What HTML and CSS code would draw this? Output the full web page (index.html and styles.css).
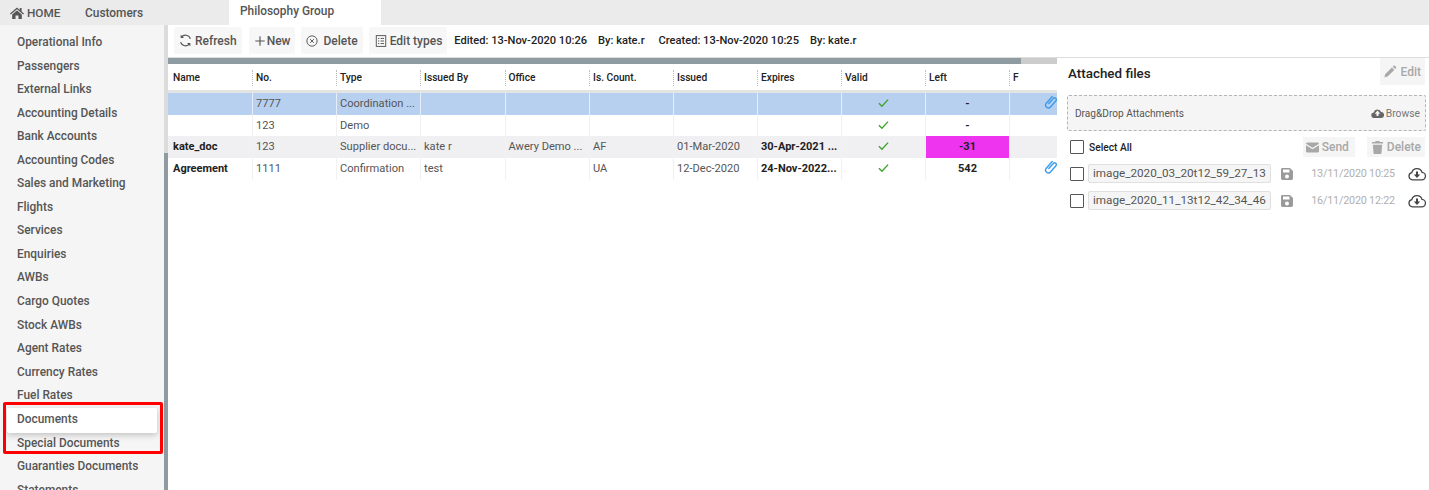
FILE: index.html
```html
<!DOCTYPE html>
<html lang="en">
<head>
<meta charset="utf-8">
<title>Philosophy Group</title>
<link rel="stylesheet" href="styles.css">
</head>
<body>
<svg class="defs" width="0" height="0">
  <symbol id="clip" viewBox="0 0 14 15"><path d="M4.200 8.600L9 3.200a1.800 1.800 0 0 1 2.800 2.300L6 12.200a3 3 0 0 1-4.500-4L7.800 1" transform="translate(1 0.600)" fill="none" stroke="currentColor" stroke-width="1.500" stroke-linecap="round"/></symbol>
  <symbol id="check" viewBox="0 0 12 10"><path d="M1 5.200L4.300 8.500L11 1.300" fill="none" stroke="currentColor" stroke-width="1.500"/></symbol>
  <symbol id="save" viewBox="0 0 12 12"><path d="M1.500 0h7.500L12 3v7.500A1.500 1.500 0 0 1 10.500 12h-9A1.500 1.500 0 0 1 0 10.500v-9A1.500 1.500 0 0 1 1.500 0zM2 1.500v3h6.500v-3zM6 6.500a2 2 0 1 0 0 4 2 2 0 0 0 0-4z" fill="currentColor" fill-rule="evenodd"/></symbol>
  <symbol id="cloud" viewBox="0 0 18 14"><path d="M4.500 12.800A3.600 3.600 0 0 1 3.800 5.700 5.300 5.300 0 0 1 14 5.400a3.700 3.700 0 0 1-.5 7.400z" fill="none" stroke="currentColor" stroke-width="1.300"/><path d="M8 4.500h2V7.500h2.200L9 11 5.800 7.500H8z" fill="currentColor"/></symbol>
</svg>

<header class="topbar">
  <a class="nav-link home">
    <svg class="home-icon" viewBox="0 0 14 12"><path d="M7 0.500L0 6.500l.8.900L7 2.200l6.200 5.200.8-.9-2.400-2V1h-1.800v2zM2.200 7.600V12h3.300V8.500h3V12h3.300V7.600L7 3.600z" fill="currentColor"/></svg>
    HOME
  </a>
  <a class="nav-link customers">Customers</a>
  <a class="tab-active">Philosophy Group</a>
</header>

<div class="shell">
  <nav class="sidebar">
    <a class="side-item">Operational Info</a>
    <a class="side-item">Passengers</a>
    <a class="side-item">External Links</a>
    <a class="side-item">Accounting Details</a>
    <a class="side-item">Bank Accounts</a>
    <a class="side-item">Accounting Codes</a>
    <a class="side-item">Sales and Marketing</a>
    <a class="side-item">Flights</a>
    <a class="side-item">Services</a>
    <a class="side-item">Enquiries</a>
    <a class="side-item">AWBs</a>
    <a class="side-item">Cargo Quotes</a>
    <a class="side-item">Stock AWBs</a>
    <a class="side-item">Agent Rates</a>
    <a class="side-item">Currency Rates</a>
    <a class="side-item">Fuel Rates</a>
    <a class="side-item active">Documents</a>
    <a class="side-item">Special Documents</a>
    <a class="side-item">Guaranties Documents</a>
    <a class="side-item">Statements</a>
  </nav>
  <div class="side-scroll"><div class="side-thumb"></div></div>

  <main class="content">
    <div class="toolbar">
      <button class="tool-btn refresh">
        <svg class="tool-icon" viewBox="0 0 14 14"><path d="M12.300 5.200A5.600 5.600 0 0 0 2.400 3.600M1.700 8.800a5.600 5.600 0 0 0 9.900 1.600" fill="none" stroke="currentColor" stroke-width="1.200"/><path d="M1.800 0.800v3.600h3.600zM12.200 13.200V9.600H8.600z" fill="currentColor"/></svg>
        Refresh
      </button>
      <button class="tool-btn new">
        <svg class="tool-icon" viewBox="0 0 14 14"><path d="M7 1.500v11M1.500 7h11" fill="none" stroke="currentColor" stroke-width="1.300"/></svg>
        New
      </button>
      <button class="tool-btn del">
        <svg class="tool-icon" viewBox="0 0 14 14"><circle cx="7" cy="7" r="6" fill="none" stroke="currentColor" stroke-width="1.100"/><path d="M4.800 4.800l4.400 4.400M9.200 4.800l-4.400 4.400" fill="none" stroke="currentColor" stroke-width="1.100"/></svg>
        Delete
      </button>
      <button class="tool-btn types">
        <svg class="tool-icon" viewBox="0 0 14 14"><rect x="1.500" y="0.700" width="11" height="12.600" fill="none" stroke="currentColor" stroke-width="1.100"/><path d="M3.500 4h1.500M6.500 4h4M3.500 7h1.500M6.500 7h4M3.500 10h1.500M6.500 10h4" fill="none" stroke="currentColor" stroke-width="1.100"/></svg>
        Edit types
      </button>
      <div class="meta">
        <span>Edited: 13-Nov-2020 10:26</span>
        <span>By: kate.r</span>
        <span>Created: 13-Nov-2020 10:25</span>
        <span>By: kate.r</span>
      </div>
    </div>

    <div class="work">
      <section class="grid-area">
        <div class="h-scroll"><div class="h-thumb"></div></div>
        <div class="grid-row head">
          <div class="cell">Name</div><div class="cell">No.</div><div class="cell">Type</div><div class="cell">Issued By</div><div class="cell">Office</div><div class="cell">Is. Count.</div><div class="cell">Issued</div><div class="cell">Expires</div><div class="cell">Valid</div><div class="cell">Left</div><div class="cell">F</div>
        </div>
        <div class="grid-row data selected">
          <div class="cell"></div><div class="cell">7777</div><div class="cell">Coordination ...</div><div class="cell"></div><div class="cell"></div><div class="cell"></div><div class="cell"></div><div class="cell"></div>
          <div class="cell center ok"><svg class="check"><use href="#check"/></svg></div><div class="cell center strong">-</div><div class="cell clipcell"><svg class="clip"><use href="#clip"/></svg></div>
        </div>
        <div class="grid-row data">
          <div class="cell"></div><div class="cell">123</div><div class="cell">Demo</div><div class="cell"></div><div class="cell"></div><div class="cell"></div><div class="cell"></div><div class="cell"></div>
          <div class="cell center ok"><svg class="check"><use href="#check"/></svg></div><div class="cell center strong">-</div><div class="cell"></div>
        </div>
        <div class="grid-row data alt">
          <div class="cell strong">kate_doc</div><div class="cell">123</div><div class="cell">Supplier docu...</div><div class="cell">kate r</div><div class="cell">Awery Demo ...</div><div class="cell">AF</div><div class="cell">01-Mar-2020</div><div class="cell strong">30-Apr-2021 ...</div>
          <div class="cell center ok"><svg class="check"><use href="#check"/></svg></div><div class="cell center strong overdue">-31</div><div class="cell"></div>
        </div>
        <div class="grid-row data">
          <div class="cell strong">Agreement</div><div class="cell">1111</div><div class="cell">Confirmation</div><div class="cell">test</div><div class="cell"></div><div class="cell">UA</div><div class="cell">12-Dec-2020</div><div class="cell strong">24-Nov-2022...</div>
          <div class="cell center ok"><svg class="check"><use href="#check"/></svg></div><div class="cell center strong">542</div><div class="cell clipcell"><svg class="clip"><use href="#clip"/></svg></div>
        </div>
      </section>

      <aside class="files">
        <div class="files-head">
          <h2>Attached files</h2>
          <button class="file-btn edit">
            <svg class="btn-icon" viewBox="0 0 14 14"><path d="M0.500 13.500l.8-3.500 7.500-7.500 2.700 2.700-7.500 7.500zM9.700 1.600l1-1a1 1 0 0 1 1.400 0l1.300 1.300a1 1 0 0 1 0 1.400l-1 1z" fill="currentColor"/></svg>
            Edit
          </button>
        </div>
        <div class="dropzone">
          <span>Drag&amp;Drop Attachments</span>
          <span class="browse">
            <svg class="browse-icon" viewBox="0 0 14 11"><path d="M3.500 11A3 3 0 0 1 2.800 5 4.300 4.300 0 0 1 11 4.400 3.300 3.300 0 0 1 10.800 11zM7 2.800L3.900 6.200h2v2.600h2.200V6.200h2z" fill="currentColor" fill-rule="evenodd"/></svg>
            Browse
          </span>
        </div>
        <div class="select-row">
          <label class="select-all"><span class="box"></span>Select All</label>
          <button class="file-btn">
            <svg class="btn-icon" viewBox="0 0 14 11"><path d="M0 1.500A1.500 1.500 0 0 1 1.500 0h11A1.500 1.500 0 0 1 14 1.500L7 5.800zM0 3.200l7 4.200 7-4.200v6.300a1.500 1.500 0 0 1-1.500 1.500h-11A1.500 1.500 0 0 1 0 9.500z" fill="currentColor"/></svg>
            Send
          </button>
          <button class="file-btn">
            <svg class="btn-icon" viewBox="0 0 12 14"><path d="M4 0h4l.6 1.200H12v1.600H0V1.200h3.400zM1 4h10l-.7 9a1 1 0 0 1-1 1H2.700a1 1 0 0 1-1-1z" fill="currentColor"/></svg>
            Delete
          </button>
        </div>
        <div class="file-row">
          <span class="box"></span>
          <span class="file-name">image_2020_03_20t12_59_27_13</span>
          <svg class="save"><use href="#save"/></svg>
          <span class="file-date">13/11/2020 10:25</span>
          <svg class="cloud"><use href="#cloud"/></svg>
        </div>
        <div class="file-row">
          <span class="box"></span>
          <span class="file-name">image_2020_11_13t12_42_34_46</span>
          <svg class="save"><use href="#save"/></svg>
          <span class="file-date">16/11/2020 12:22</span>
          <svg class="cloud"><use href="#cloud"/></svg>
        </div>
      </aside>
    </div>
  </main>
</div>
<div class="callout"></div>
</body>
</html>
```
FILE: styles.css
```css
* { box-sizing: border-box; }
html, body { margin: 0; height: 100%; overflow: hidden; }
body { font-family: Roboto, "Liberation Sans", sans-serif; font-size: 12px; font-weight: 500; color: #4b4b4b; background: #fff; position: relative; }
.defs { position: absolute; }

.topbar { height: 25px; background: #ebebeb; display: flex; align-items: center; }
.nav-link { color: #555; }
.home { margin-left: 10px; width: 75px; display: flex; align-items: center; gap: 3px; font-size: 11.800px; }
.home-icon { width: 14px; height: 12px; }
.customers { width: 144px; font-size: 11.900px; }
.tab-active { width: 152px; height: 25px; background: #fff; padding-left: 11px; line-height: 23px; color: #555; font-size: 11.900px; }

.shell { display: flex; height: 465px; }
.sidebar { width: 164px; background: #f5f5f5; padding: 6px 4px 0 5px; overflow: hidden; flex: none; font-size: 11.900px; }
.side-item { display: block; height: 23.550px; line-height: 23.550px; padding-left: 12px; color: #565656; white-space: nowrap; border-radius: 2px; }
.side-item.active { background: #fff; box-shadow: 0 2px 6px rgba(0,0,0,.22); margin: 0 3px 0 2px; padding-left: 10px; height: 25px; margin-bottom: -1px; position: relative; z-index: 0; }
.side-scroll { width: 4px; background: #dcdcdc; flex: none; }
.side-thumb { margin-top: 128px; height: 337px; background: #8e9ba1; }

.content { flex: 1; min-width: 0; display: flex; flex-direction: column; }
.toolbar { height: 33px; display: flex; align-items: center; padding-left: 6px; gap: 7px; border-bottom: 1px solid #ddd; flex: none; }
.tool-btn { height: 27px; padding: 0 5px; border: 0; border-radius: 2px; background: #f7f7f7; font: inherit; color: #555; display: flex; align-items: center; gap: 3px; white-space: nowrap; margin-top: -1px; }
.tool-icon { width: 12px; height: 12px; }
.tool-btn.refresh { gap: 3px; }
.tool-btn.refresh .tool-icon { width: 13px; height: 13px; }
.tool-btn.new { gap: 1px; margin-right: -1px; }
.tool-btn.del { gap: 5px; margin-right: -1px; }
.tool-btn.types { padding-left: 6px; }
.meta { display: flex; gap: 11px; font-size: 11.100px; color: #222; white-space: nowrap; margin-top: -1px; }
.meta span:nth-child(2) { margin-right: 3px; }

.work { flex: 1; display: flex; }
.grid-area { width: 889px; flex: none; }
.h-scroll { height: 6px; background: #ccc; }
.h-thumb { width: 853px; height: 6px; background: #8e9ba1; }
.grid-row { display: grid; grid-template-columns: 84px 84px 84px 84.500px 84.500px 84px 84px 84px 84px 84px 1fr; }
.head { height: 29px; align-items: center; font-size: 10.200px; color: #222; border-bottom: 3px solid #e4e4e4; padding-top: 1px; }
.head .cell { height: 16px; line-height: 16px; padding-left: 3px; border-left: 1px dotted #bbb; }
.head .cell:first-child { border-left: 0; padding-left: 5px; }
.data { height: 21.700px; line-height: 21px; font-weight: 400; font-size: 11.100px; color: #555; }
.data .cell { padding-left: 3px; border-left: 1px solid #f1f1f3; white-space: nowrap; overflow: hidden; }
.data .cell:first-child { border-left: 0; padding-left: 5px; }
.selected { background: #b8d0f0; }
.selected .cell { border-left-color: #e6eefa; }
.alt { background: #f0f0f2; }
.data .strong { font-weight: 700; color: #222; font-size: 11px; }
.data .center { text-align: center; padding: 0; }
.ok { color: #3ea32c; }
.check { width: 11px; height: 10px; vertical-align: -1px; }
.data .overdue { background: #ee34ee; }
.clipcell { color: #3d9be9; text-align: right; }
.data .clipcell { padding-right: 0; line-height: 19px; }
.clip { width: 13px; height: 14px; vertical-align: -3px; }

.files { flex: 1; padding: 0 3px 0 10px; min-width: 0; }
.files-head { display: flex; justify-content: space-between; align-items: center; height: 30px; margin-left: 1px; }
h2 { margin: 0; font-size: 13.400px; font-weight: 500; color: #222; }
.file-btn { height: 20px; padding: 0 4px; border: 0; background: #f5f5f5; font: inherit; color: #a8a8a8; display: flex; align-items: center; gap: 3px; }
.file-btn.edit { height: 27px; width: 45px; margin-right: 1px; align-self: flex-start; gap: 4px; }
.btn-icon { width: 13px; height: 13px; }
.dropzone { height: 36px; margin-top: 7px; display: flex; justify-content: space-between; align-items: center; padding: 0 5px 0 7px; background: #f5f5f5; border: 1px dashed #b5b5b5; border-radius: 2px; font-weight: 400; font-size: 10.100px; color: #555; }
.browse { display: flex; align-items: center; gap: 2px; color: #777; font-size: 10.300px; }
.browse-icon { width: 13px; height: 10px; color: #666; }
.select-row { display: flex; align-items: center; gap: 12px; height: 20px; margin-top: 6px; padding: 0 1px 0 3px; }
.select-all { display: flex; align-items: center; gap: 5px; margin-right: auto; font-size: 10.200px; color: #222; }
.select-row .file-btn:first-of-type { gap: 3px; padding: 0 6px 0 3px; }
.box { width: 14px; height: 14px; border: 1px solid #555; border-radius: 1px; background: #fff; flex: none; }
.file-row { display: flex; align-items: center; height: 27px; padding-left: 3px; position: relative; top: 3px; }
.file-name { width: 184px; height: 19px; margin-left: 4px; line-height: 17px; padding-left: 4px; background: #f5f5f5; border: 1px solid #e0e0e0; border-radius: 2px; font-weight: 400; font-size: 11.700px; color: #555; white-space: nowrap; overflow: hidden; }
.save { width: 12px; height: 12px; margin-left: 10px; color: #9a9a9a; }
.file-date { width: 84px; margin-left: 18px; font-weight: 400; font-size: 10.800px; letter-spacing: -.2px; color: #b0b0b0; white-space: nowrap; }
.cloud { width: 18px; height: 14px; margin-left: 13px; color: #444; flex: none; }

.callout { position: absolute; left: 3px; top: 402px; width: 160px; height: 52px; border: 3px solid #f00; border-radius: 2px; }
```
